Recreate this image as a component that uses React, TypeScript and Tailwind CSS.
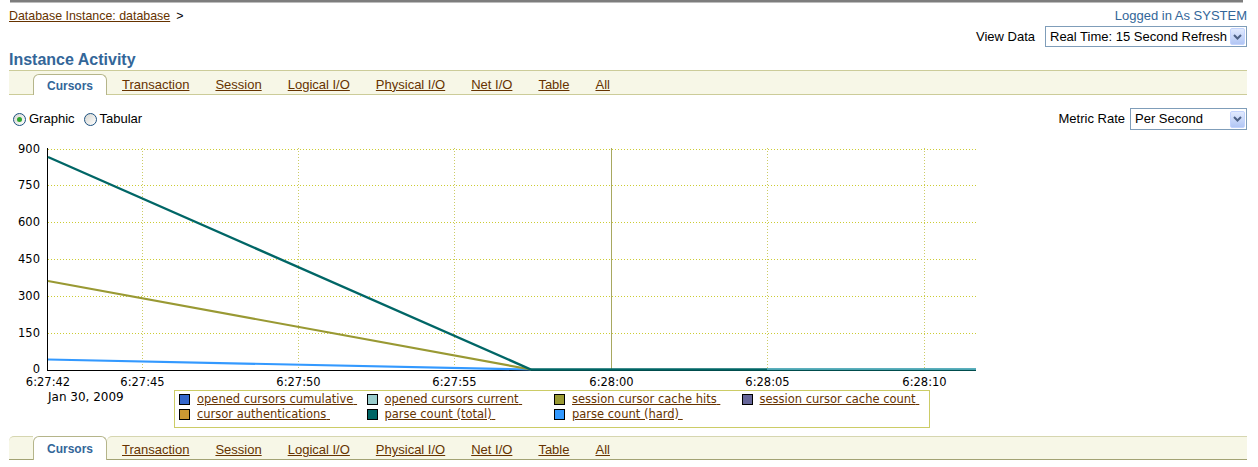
import React from "react"

const tabs = ["Transaction", "Session", "Logical I/O", "Physical I/O", "Net I/O", "Table", "All"]

const legend = [
  { label: "opened cursors cumulative", color: "bg-[#3366cc]" },
  { label: "opened cursors current", color: "bg-[#99cccc]" },
  { label: "session cursor cache hits", color: "bg-[#999933]" },
  { label: "session cursor cache count", color: "bg-[#666699]" },
  { label: "cursor authentications", color: "bg-[#cc9933]" },
  { label: "parse count (total)", color: "bg-[#006666]" },
  { label: "parse count (hard)", color: "bg-[#3399ff]" },
]

// 0..900 mapped onto the plot, 6:27:42 at x=48
const yOf = (v: number) => 7.5 + ((900 - v) * 221.5) / 900
const xTicks = [
  { t: "6:27:45", x: 142.5 },
  { t: "6:27:50", x: 298.5 },
  { t: "6:27:55", x: 454.5 },
  { t: "6:28:00", x: 611.5 },
  { t: "6:28:05", x: 767.5 },
  { t: "6:28:10", x: 924.5 },
]

function Arrow() {
  return (
    <span className="w-[15px] h-[17px] rounded-[2px] border border-[#c3d3fd] bg-gradient-to-b from-[#e1eafe] to-[#b2c6f4] flex items-center justify-center">
      <svg width="9" height="6" viewBox="0 0 9 6">
        <path d="M1 1 L4.5 4.5 L8 1" fill="none" stroke="#4d6185" strokeWidth="2" />
      </svg>
    </span>
  )
}

function Radio({ checked, label }: { checked?: boolean; label: string }) {
  return (
    <label className="flex items-center gap-[3px]">
      <span className="w-[13px] h-[13px] rounded-full border border-[#1c5180] bg-gradient-to-br from-[#d6d6d0] to-white flex items-center justify-center">
        {checked && <span className="w-[5px] h-[5px] rounded-full bg-[#2ea52e]" />}
      </span>
      <span>{label}</span>
    </label>
  )
}

function TabBar({ bottom }: { bottom?: boolean }) {
  return (
    <div
      className={`ml-[9px] w-[1238px] flex border-b border-[#a3a374] ${
        bottom ? "h-[24px]" : "h-[25px] bg-[#f7f7e7] border-t border-[#cccc99]"
      }`}
    >
      <div className={`w-[24px] bg-[#f7f7e7] ${bottom ? "rounded-tl-[5px] border-t border-[#d6d6b0]" : ""}`} />
      <div
        className={`w-[74px] -mb-px bg-white border-x border-t border-[#b5b58a] rounded-t-[6px] flex items-center justify-center pt-[1px] font-bold text-[12px] text-[#336699] ${
          bottom ? "" : "mt-[3px]"
        }`}
      >
        Cursors
      </div>
      <div
        className={`flex-1 flex items-center pl-[15px] gap-[26px] pt-[4px] bg-[#f7f7e7] ${
          bottom ? "rounded-tl-[5px] border-t border-[#d6d6b0]" : ""
        }`}
      >
        {tabs.map((t) => (
          <a key={t} className="text-[#663300] underline underline-offset-[1px]">{t}</a>
        ))}
      </div>
    </div>
  )
}

function Chart() {
  const y0 = 229
  return (
    <svg width="1000" height="248" className="block" style={{ fontFamily: "'DejaVu Sans', sans-serif" }}>
      {[900, 750, 600, 450, 300, 150].map((v) => (
        <line key={v} x1="48" x2="976" y1={Math.round(yOf(v)) + 0.5} y2={Math.round(yOf(v)) + 0.5} stroke="#cccc33" strokeDasharray="1 2" />
      ))}
      {xTicks.map((k) =>
        k.t === "6:28:00" ? (
          <line key={k.t} x1={k.x} x2={k.x} y1="7" y2={y0} stroke="#a8a860" />
        ) : (
          <line key={k.t} x1={k.x} x2={k.x} y1="7" y2={y0} stroke="#cccc66" strokeDasharray="1 2" />
        )
      )}
      <line x1="47.5" x2="47.5" y1="7" y2="230" stroke="#000" />
      <line x1="47" x2="976" y1="229.5" y2="229.5" stroke="#000" />

      {/* series */}
      <polyline points="48,218.5 531,228.5" fill="none" stroke="#3399ff" strokeWidth="2.2" />
      <polyline points="48,140 531,228.5" fill="none" stroke="#999933" strokeWidth="2.2" />
      <polyline points="48,16 531,228.5 976,228.5" fill="none" stroke="#006666" strokeWidth="2.4" />
      <line x1="767" x2="976" y1="228" y2="228" stroke="#66bbcc" strokeWidth="1.5" />

      {[900, 750, 600, 450, 300, 150, 0].map((v) => (
        <text key={v} x="40" y={v === 0 ? yOf(v) + 3 : yOf(v) + 4} textAnchor="end" fontSize="11.5" fill="#000">
          {v}
        </text>
      ))}
      <text x="48" y="245" textAnchor="middle" fontSize="11.5" fill="#000">6:27:42</text>
      {xTicks.map((k) => (
        <text key={k.t} x={k.x} y="245" textAnchor="middle" fontSize="11.5" fill="#000">
          {k.t}
        </text>
      ))}
    </svg>
  )
}

export default function App() {
  return (
    <div className="w-[1258px] h-[467px] overflow-hidden bg-white text-[13px] text-black font-['Liberation_Sans',Arial,sans-serif]">
      <div className="ml-[10px] w-[1233px] h-[3px] bg-[#7d7d7d] border-b border-[#bdbdbd]" />

      <div className="flex justify-between pl-[9px] pr-[11px]">
        <div className="mt-[6px] leading-[14px] text-[12.4px]">
          <a className="text-[#663300] underline">Database Instance: database</a>
          <span className="ml-[6px]">&gt;</span>
        </div>
        <div className="flex flex-col items-end">
          <div className="mt-[6px] leading-[14px] text-[#336699]">Logged in As SYSTEM</div>
          <div className="mt-[3px] flex items-center gap-[10px]">
            <span>View Data</span>
            <div className="w-[202px] h-[21px] border border-[#7f9db9] flex items-center justify-between pl-[4px] pr-[1px]">
              <span>Real Time: 15 Second Refresh</span>
              <Arrow />
            </div>
          </div>
        </div>
      </div>

      <h1 className="ml-[9px] mt-[3px] h-[20px] leading-[20px] text-[16px] font-bold text-[#336699]">Instance Activity</h1>

      <TabBar />

      <div className="flex justify-between items-center pl-[13px] pr-[11px] mt-[13px] h-[22px]">
        <div className="flex items-center gap-[9px]">
          <Radio checked label="Graphic" />
          <Radio label="Tabular" />
        </div>
        <div className="flex items-center gap-[5px]">
          <span>Metric Rate</span>
          <div className="w-[117px] h-[22px] border border-[#7f9db9] flex items-center justify-between pl-[4px] pr-[1px]">
            <span>Per Second</span>
            <Arrow />
          </div>
        </div>
      </div>

      <div className="mt-[11px]">
        <Chart />
      </div>

      <div className="flex mt-[1px]">
        <div className="w-[174px] pl-[48px] leading-[14px] text-[12px] font-['DejaVu_Sans',sans-serif]">Jan 30, 2009</div>
        <div className="w-[756px] border border-[#cccc66] pl-[4px] pt-[1px] pb-[5px] grid grid-cols-4 font-['DejaVu_Sans',sans-serif] text-[11.5px]">
          {legend.map((l) => (
            <div key={l.label} className="h-[15px] flex items-center gap-[7px]">
              <span className={`w-[11px] h-[11px] border border-black ${l.color}`} />
              <a className="text-[#663300] underline">{l.label}&nbsp;</a>
            </div>
          ))}
        </div>
      </div>

      <div className="mt-[8px]">
        <TabBar bottom />
      </div>
    </div>
  )
}
